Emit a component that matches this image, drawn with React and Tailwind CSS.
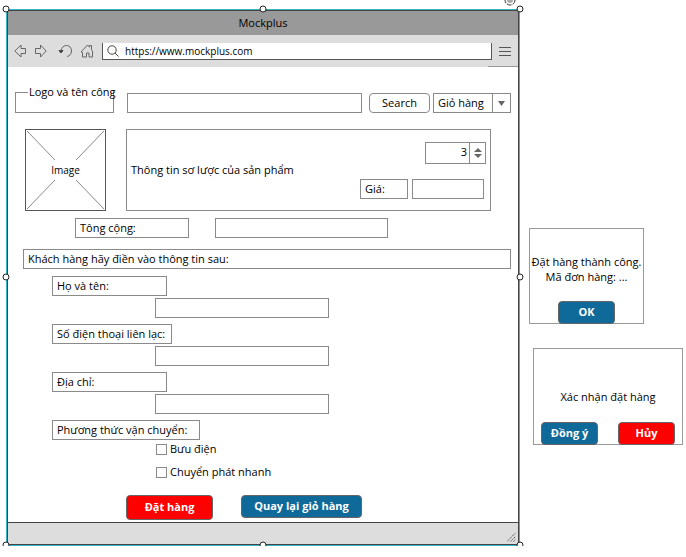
import React from "react";

const box = "h-5 border border-[#8a8a8a] bg-white px-1 outline-none";
const label = "block h-5 border border-[#8a8a8a] bg-white px-1 leading-[18px] whitespace-nowrap";
const action = "rounded-[4px] border border-[#666] text-center font-bold text-white";

function Handle({ place }) {
  return (
    <span
      className={`absolute size-[7px] -translate-x-1/2 -translate-y-1/2 rounded-full border border-[#222] bg-white ${place}`}
    />
  );
}

function Handles() {
  return (
    <div aria-hidden="true" className="pointer-events-none absolute -top-px -right-px bottom-0 -left-px">
      <Handle place="left-0 top-0" />
      <Handle place="left-1/2 top-0" />
      <Handle place="left-full top-0" />
      <Handle place="left-0 top-1/2" />
      <Handle place="left-full top-1/2" />
      <Handle place="left-0 top-full" />
      <Handle place="left-1/2 top-full" />
      <Handle place="left-full top-full" />
      <svg className="absolute right-1 -top-[15px]" width="12" height="12" viewBox="0 0 12 12">
        <circle cx="6" cy="6" r="5" fill="#fff" stroke="#333" strokeDasharray="5 1" />
        <circle cx="6" cy="6" r="3" fill="#aaa" />
      </svg>
    </div>
  );
}

function Toolbar() {
  return (
    <div className="relative flex h-8 items-center bg-[#ddd] px-1.5">
      <button aria-label="Back" className="w-5">
        <svg width="14" height="14" viewBox="0 0 14 14" fill="none" stroke="#666">
          <path d="M.8 7 7 1v3.500h4.500v5H7V13z" />
        </svg>
      </button>
      <button aria-label="Forward" className="w-6">
        <svg width="14" height="14" viewBox="0 0 14 14" fill="none" stroke="#666">
          <path d="M12.200 7 6.500 1v3.500h-5v5h5V13z" />
        </svg>
      </button>
      <button aria-label="Reload" className="w-[22px]">
        <svg width="15" height="14" viewBox="0 0 15 14" fill="none" stroke="#666">
          <path d="M3 7C3.500 3.500 5.500 1.500 8.500 1.500s5 2.200 5 5.500-2 5-4.500 5.500" />
          <path d="M1 6.500h4L3 9z" fill="#444" stroke="#444" />
        </svg>
      </button>
      <button aria-label="Home" className="w-[22px]">
        <svg width="14" height="14" viewBox="0 0 14 14" fill="none" stroke="#666">
          <path d="M1 8 7.500 1l2 2.200V1.500h2v4L13 8.500h-.5v4.500H9V9H6.500v4h-4V8.500z" />
        </svg>
      </button>
      <label className="flex h-[17px] flex-1 items-center gap-1.5 border-x border-b border-[#555] bg-white pl-1">
        <svg width="12" height="12" viewBox="0 0 12 12" fill="none" stroke="#444">
          <circle cx="5" cy="5" r="4.200" />
          <path d="m8 8 3.600 3.600" />
        </svg>
        <input
          aria-label="Address"
          defaultValue="https://www.mockplus.com"
          className="h-4 min-w-0 flex-1 bg-transparent text-[10px] outline-none"
        />
      </label>
      <button aria-label="Menu" className="mr-px ml-[7px] flex w-3 flex-col gap-[3px]">
        <span className="h-px w-full bg-[#555]" />
        <span className="h-px w-full bg-[#555]" />
        <span className="h-px w-full bg-[#555]" />
      </button>
      <span className="absolute right-0 bottom-0 h-px w-[30px] bg-[#999]" />
    </div>
  );
}

function SearchRow() {
  return (
    <div className="flex items-end px-[7px]">
      <fieldset className="h-[29px] w-[99px] min-w-0 shrink-0 border border-[#8a8a8a] pl-3">
        <legend className="h-4 w-[85px] pl-px leading-4 whitespace-nowrap">Logo và tên công</legend>
      </fieldset>
      <input aria-label="Search products" className={`${box} ml-[13px] min-w-0 flex-1`} />
      <button className="ml-[7px] h-5 w-[61px] rounded-[4px] border border-[#8a8a8a] bg-white">
        Search
      </button>
      <div className="ml-[3px] flex h-5 w-[78px] border border-[#8a8a8a]">
        <select
          aria-label="Cart"
          className="w-[59px] appearance-none border-r border-[#8a8a8a] pl-1 leading-[18px] outline-none"
        >
          <option>Giỏ hàng</option>
        </select>
        <svg className="m-auto" width="7" height="5" viewBox="0 0 7 5" fill="#666">
          <path d="M0 0h7L3.500 5z" />
        </svg>
      </div>
    </div>
  );
}

function ProductRow() {
  return (
    <div className="mt-4 flex gap-5 pr-[27px] pl-[17px]">
      <div className="grid h-[82px] w-[81px] shrink-0 place-items-center border border-[#555]">
        <svg className="col-start-1 row-start-1" width="79" height="80" viewBox="0 0 79 80" stroke="#888">
          <path d="M1 1l28 29M78 1 50 30M1 79l28-29M78 79 50 50" />
        </svg>
        <span className="col-start-1 row-start-1 text-[10px]">Image</span>
      </div>
      <div className="flex h-[82px] flex-1 items-center justify-between border border-[#8a8a8a] px-1">
        <p className="whitespace-nowrap">Thông tin sơ lược của sản phẩm</p>
        <div className="flex flex-col items-end gap-[15px]">
          <div className="flex h-[22px] w-[61px] border border-[#8a8a8a]">
            <input
              aria-label="Quantity"
              inputMode="numeric"
              defaultValue="3"
              className="w-11 border-r border-[#8a8a8a] pr-0.5 text-right outline-none"
            />
            <div className="flex flex-1 flex-col items-center justify-center gap-0.5">
              <button aria-label="Increase">
                <svg className="block" width="8" height="4" viewBox="0 0 8 4" fill="#666">
                  <path d="M0 4h8L4 0z" />
                </svg>
              </button>
              <button aria-label="Decrease">
                <svg className="block" width="8" height="4" viewBox="0 0 8 4" fill="#666">
                  <path d="M0 0h8L4 4z" />
                </svg>
              </button>
            </div>
          </div>
          <div className="flex gap-1 pr-0.5">
            <label htmlFor="price" className={`${label} w-12`}>
              Giá:
            </label>
            <input id="price" className={`${box} w-[72px]`} />
          </div>
        </div>
      </div>
    </div>
  );
}

function Field({ id, text, width }) {
  return (
    <div className="h-12">
      <label htmlFor={id} className={`${label} ${width}`}>
        {text}
      </label>
      <input id={id} className={`${box} mt-0.5 ml-[103px] block w-[174px]`} />
    </div>
  );
}

function Check({ text }) {
  return (
    <label className="flex h-4 items-center gap-[3px]">
      <input
        type="checkbox"
        className="size-[11px] appearance-none border border-[#8a8a8a] bg-white checked:bg-[#0f6a9a]"
      />
      {text}
    </label>
  );
}

function CustomerForm() {
  return (
    <form className="mt-[7px] pl-[44px]" onSubmit={(e) => e.preventDefault()}>
      <Field id="name" text="Họ và tên:" width="w-[115px]" />
      <Field id="phone" text="Số điện thoại liên lạc:" width="w-[120px]" />
      <Field id="address" text="Địa chỉ:" width="w-[115px]" />
      <fieldset>
        <legend className={`${label} w-[148px]`}>Phương thức vận chuyển:</legend>
        <div className="mt-px ml-[104px] flex flex-col gap-[7px]">
          <Check text="Bưu điện" />
          <Check text="Chuyển phát nhanh" />
        </div>
      </fieldset>
      <div className="mt-[15px] mb-0.5 ml-[74px] flex items-start gap-7">
        <button className={`${action} h-[25px] w-[87px] bg-[#f00]`}>Đặt hàng</button>
        <button className={`${action} h-[23px] w-[121px] bg-[#0f6a9a]`}>Quay lại giỏ hàng</button>
      </div>
    </form>
  );
}

export default function App() {
  return (
    <div className="flex items-start bg-white pt-[9px] pl-1.5 font-['Open_Sans','Noto_Sans',sans-serif] text-[11px] text-black">
      <main className="relative min-w-0 flex-1 border border-[#35b5c8]">
        <div className="border border-[#444]">
          <h1 className="h-6 bg-[#999] text-center leading-6">Mockplus</h1>
          <Toolbar />
          <div className="pt-[17px]">
            <SearchRow />
            <ProductRow />
            <div className="mt-[7px] flex gap-[26px] pl-[67px]">
              <label htmlFor="total" className={`${label} w-[114px]`}>
                Tông cộng:
              </label>
              <input id="total" className={`${box} w-[173px]`} />
            </div>
            <h2 className={`${label} mt-[11px] mr-[7px] ml-[15px]`}>
              Khách hàng hãy điền vào thông tin sau:
            </h2>
            <CustomerForm />
          </div>
          <footer className="flex h-[22px] items-end justify-end border-t border-[#444] bg-[#ddd] p-0.5">
            <svg width="9" height="9" viewBox="0 0 9 9" stroke="#444" strokeDasharray="1.500 1">
              <path d="M0 8.500 8.500 0M3.500 8.500l5-5M6.500 8.500l2-2" />
            </svg>
          </footer>
        </div>
        <Handles />
      </main>

      <aside className="flex w-[166px] shrink-0 flex-col gap-6 pt-[219px] pr-[3px] pl-[9px]">
        <section className="flex h-24 w-[115px] flex-col items-center justify-between border border-[#999] pt-[25px]">
          <p className="text-center leading-[15px] whitespace-nowrap">
            Đặt hàng thành công.
            <br />
            Mã đơn hàng: ...
          </p>
          <button className={`${action} -mb-px h-[23px] w-[57px] bg-[#0f6a9a]`}>OK</button>
        </section>
        <section className="ml-1 flex h-[97px] flex-col justify-between border border-[#999] pt-10">
          <p className="text-center">Xác nhận đặt hàng</p>
          <div className="-mb-px flex justify-between px-[7px]">
            <button className={`${action} h-[23px] w-[57px] bg-[#0f6a9a]`}>Đồng ý</button>
            <button className={`${action} h-[23px] w-[57px] bg-[#f00]`}>Hủy</button>
          </div>
        </section>
      </aside>
    </div>
  );
}
